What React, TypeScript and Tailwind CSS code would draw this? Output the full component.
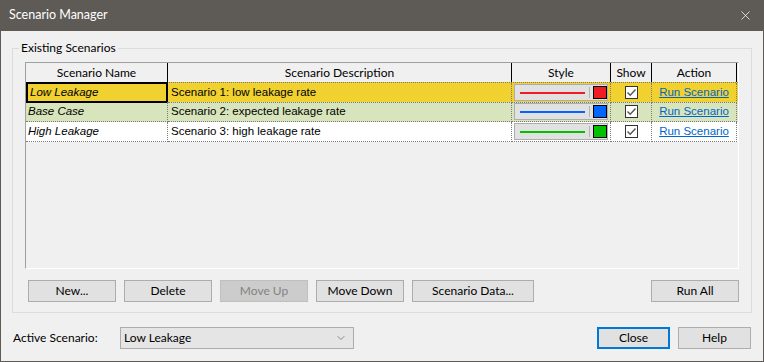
import { ChevronDown, X } from "lucide-react";

const rows = [
  { name: "Low Leakage", desc: "Scenario 1: low leakage rate", color: "#ee1c24", bg: "bg-[#f0d12f]", focus: true },
  { name: "Base Case", desc: "Scenario 2: expected leakage rate", color: "#0066ff", bg: "bg-[#d8e4bc]", focus: false },
  { name: "High Leakage", desc: "Scenario 3: high leakage rate", color: "#00c000", bg: "bg-white", focus: false },
];

const cols = "grid grid-cols-[142px_344px_99px_41px_85px]";
const cell = "border-r border-b border-dotted border-[#7a7a7a] flex items-center";

function Btn({ label, w = "w-[88px]", disabled = false, primary = false }: { label: string; w?: string; disabled?: boolean; primary?: boolean }) {
  return (
    <button
      className={`${w} h-[22px] text-[12px] leading-none flex items-center justify-center ${
        disabled
          ? "bg-[#cccccc] border border-[#bfbfbf] text-[#838383]"
          : primary
          ? "bg-[#e1e1e1] border-2 border-[#0078d7] text-black"
          : "bg-[#e1e1e1] border border-[#adadad] text-black"
      }`}
    >
      {label}
    </button>
  );
}

function StyleSwatch({ color }: { color: string }) {
  return (
    <div className="mx-[2px] w-[95px] h-[17px] bg-[#e1e1e1] border border-[#adadad] flex items-center pl-[5px]">
      <div className="w-[65px] h-[2px]" style={{ background: color }} />
      <div className="ml-[4px] w-[1px] h-[11px] bg-[#b5b5b5]" />
      <div className="ml-[3px] w-[14px] h-[13px] border border-black" style={{ background: color }} />
    </div>
  );
}

function Check() {
  return (
    <div className="w-[13px] h-[13px] bg-white border border-[#333] flex items-center justify-center">
      <svg width="11" height="11" viewBox="0 0 11 11">
        <path d="M1.5 5.5 L4.2 8.2 L9.5 2.5" fill="none" stroke="#555" strokeWidth="1.4" />
      </svg>
    </div>
  );
}

export default function App() {
  return (
    <div className="w-[764px] h-[362px] bg-[#f0f0f0] border-x border-b border-[#5e5a56] flex flex-col text-black" style={{ fontFamily: "Lato, 'Noto Sans', sans-serif" }}>
      <div className="h-[31px] bg-[#5e5a56] flex items-center justify-between pl-[8px] pr-[10px] shrink-0">
        <span className="text-white text-[12.5px]">Scenario Manager</span>
        <X className="text-white w-[15px] h-[15px]" strokeWidth={1.2} />
      </div>

      <div className="px-[11px] pt-[17px]">
        <div className="relative border border-[#dcdcdc] h-[265px] pt-[13px] px-[12px]">
          <span className="absolute -top-[9px] left-[6px] px-[2px] bg-[#f0f0f0] text-[12px] leading-[16px]">Existing Scenarios</span>

          <div className="h-[207px] border-t border-l border-[#a0a0a0] border-r border-b border-r-white border-b-white bg-[#f0f0f0]">
            <div className={`${cols} h-[19px] bg-[#f0f0f0] text-[12px]`}>
              {["Scenario Name", "Scenario Description", "Style", "Show", "Action"].map((h) => (
                <div key={h} className="border-r border-black flex items-center justify-center">{h}</div>
              ))}
            </div>
            {rows.map((r, i) => (
              <div
                key={r.name}
                className={`${cols} h-[20px] text-[11.5px] ${r.bg} ${i === 0 ? "border-t border-dotted border-[#7a7a7a]" : ""}`}
                style={{ fontFamily: "'Liberation Sans', Arial, sans-serif" }}
              >
                <div className={`${r.focus ? "border-2 border-black -mt-[1px] h-[21px]" : cell} flex items-center pl-[2px] italic`}>{r.name}</div>
                <div className={`${cell} pl-[3px]`}>{r.desc}</div>
                <div className={`${cell} justify-center`}><StyleSwatch color={r.color} /></div>
                <div className={`${cell} justify-center`}><Check /></div>
                <div className={`${cell} justify-center`}>
                  <span className="text-[#0066cc] underline">Run Scenario</span>
                </div>
              </div>
            ))}
          </div>

          <div className="mt-[11px] ml-[3px] flex gap-[8px]">
            <Btn label="New..." />
            <Btn label="Delete" />
            <Btn label="Move Up" disabled />
            <Btn label="Move Down" />
            <Btn label="Scenario Data..." w="w-[122px]" />
            <div className="ml-auto"><Btn label="Run All" /></div>
          </div>
        </div>

        <div className="mt-[14px] flex items-center">
          <span className="w-[108px] pl-[1px] text-[12px]">Active Scenario:</span>
          <div className="w-[234px] h-[22px] bg-[#e5e5e5] border border-[#adadad] flex items-center justify-between pl-[3px] pr-[6px] text-[12px]">
            <span>Low Leakage</span>
            <ChevronDown className="w-[12px] h-[12px] text-[#555]" strokeWidth={1.3} />
          </div>
          <div className="ml-auto flex gap-[8px] mr-[1px]">
            <Btn label="Close" w="w-[73px]" primary />
            <Btn label="Help" w="w-[73px]" />
          </div>
        </div>
      </div>
    </div>
  );
}
